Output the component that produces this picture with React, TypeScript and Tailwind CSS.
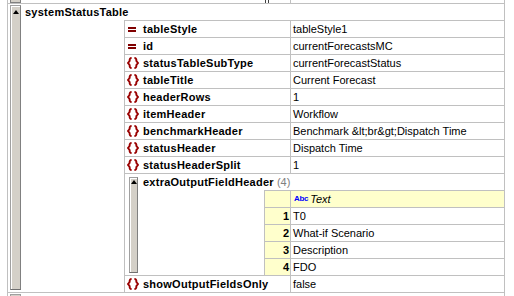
import React from "react";

type Prop = { kind: "attr" | "elem"; name: string; value: string };

const headProps: Prop[] = [
  { kind: "attr", name: "tableStyle", value: "tableStyle1" },
  { kind: "attr", name: "id", value: "currentForecastsMC" },
  { kind: "elem", name: "statusTableSubType", value: "currentForecastStatus" },
  { kind: "elem", name: "tableTitle", value: "Current Forecast" },
  { kind: "elem", name: "headerRows", value: "1" },
  { kind: "elem", name: "itemHeader", value: "Workflow" },
  { kind: "elem", name: "benchmarkHeader", value: "Benchmark &lt;br&gt;Dispatch Time" },
  { kind: "elem", name: "statusHeader", value: "Dispatch Time" },
  { kind: "elem", name: "statusHeaderSplit", value: "1" },
];

const extraFields = ["T0", "What-if Scenario", "Description", "FDO"];

function AttrIcon() {
  return (
    <span className="flex w-[18px] shrink-0 flex-col gap-[1px] pl-[3px]">
      <span className="h-[2px] w-[8px] bg-[#800000]" />
      <span className="h-[2px] w-[8px] bg-[#800000]" />
    </span>
  );
}

function ElemIcon() {
  return (
    <span className="flex w-[18px] shrink-0 pl-[2px]">
      <svg width="12" height="12" viewBox="0 0 12 12" fill="none">
        <path
          d="M4.6 1 C2.6 1 2.6 2.2 2.6 4 L1 6 L2.6 8 C2.6 9.8 2.6 11 4.6 11"
          stroke="#990000"
          strokeWidth="2"
        />
        <path
          d="M7.4 1 C9.4 1 9.4 2.2 9.4 4 L11 6 L9.4 8 C9.4 9.8 9.4 11 7.4 11"
          stroke="#990000"
          strokeWidth="2"
        />
      </svg>
    </span>
  );
}

// grey collapse strip with the little up arrow at its top
function CollapseBar({ wide }: { wide?: boolean }) {
  return (
    <div
      className={
        wide
          ? "flex w-[11px] flex-col items-center border border-[#a0a0a0] border-r-[#808080] border-b-[#707070] bg-[#d4d0c8] shadow-[inset_1px_1px_0_#ffffff]"
          : "flex w-[9px] flex-col items-center border border-[#a0a0a0] border-r-[#808080] border-b-[#707070] bg-[#d4d0c8] shadow-[inset_1px_1px_0_#ffffff]"
      }
    >
      <span
        className={
          wide
            ? "mt-[4px] h-0 w-0 border-x-[3px] border-b-[4px] border-x-transparent border-b-black"
            : "mt-[2px] h-0 w-0 border-x-[3px] border-b-[4px] border-x-transparent border-b-black"
        }
      />
    </div>
  );
}

function PropRow({ p }: { p: Prop }) {
  return (
    <div className="flex h-[17px] border-t border-[#c0c0c0]">
      <div className="flex w-[165px] shrink-0 items-center font-bold tracking-[0.25px]">
        {p.kind === "attr" ? <AttrIcon /> : <ElemIcon />}
        <span>{p.name}</span>
      </div>
      <div className="flex-1 truncate border-l border-[#c0c0c0] pl-[2px]">{p.value}</div>
    </div>
  );
}

export default function App() {
  return (
    <div className="h-[296px] w-[514px] overflow-hidden bg-white font-['Liberation_Sans',Arial,sans-serif] text-[11px] leading-[16px] text-black">
      <div className="ml-[7px] w-[498px] border-x border-[#c0c0c0]">
        {/* tail of the previous row */}
        <div className="flex h-[4px] border-b border-[#c0c0c0]">
          <div className="flex w-[282px] shrink-0">
            <div className="ml-[2px] h-[3px] w-[11px] border-x border-b border-[#808080] bg-[#d4d0c8]" />
            <div className="ml-[244px] flex h-[3px] gap-[2px]">
              <span className="w-[1px] bg-[#404040]" />
              <span className="w-[1px] bg-[#404040]" />
            </div>
          </div>
          <div className="flex-1 border-l border-[#c0c0c0]" />
        </div>

        {/* systemStatusTable */}
        <div className="flex border-b border-[#c0c0c0]">
          <div className="flex w-[17px] shrink-0 pt-[1px] pb-[2px] pl-[2px]">
            <CollapseBar wide />
          </div>
          <div className="flex-1">
            <div className="h-[16px] font-bold tracking-[0.25px]">systemStatusTable</div>
            <div className="ml-[99px] border-l border-[#c0c0c0]">
              {headProps.map((p) => (
                <PropRow key={p.name} p={p} />
              ))}

              {/* extraOutputFieldHeader */}
              <div className="flex border-t border-[#c0c0c0]">
                <div className="flex w-[18px] shrink-0 pt-[3px] pb-[2px] pl-[4px]">
                  <CollapseBar />
                </div>
                <div className="flex-1">
                  <div className="h-[16px]">
                    <span className="font-bold tracking-[0.25px]">extraOutputFieldHeader</span>{" "}
                    <span className="text-[#808080]">(4)</span>
                  </div>
                  <div className="ml-[121px] border-l border-[#c0c0c0]">
                    <div className="flex h-[17px] border-t border-[#c0c0c0] bg-[#ffffcc]">
                      <div className="w-[25px] shrink-0" />
                      <div className="flex flex-1 items-center border-l border-[#c0c0c0] pl-[3px]">
                        <span className="text-[8px] leading-none font-bold tracking-[-0.3px] text-[#0000ff]">
                          Abc
                        </span>
                        <span className="ml-[2px] italic">Text</span>
                      </div>
                    </div>
                    {extraFields.map((f, i) => (
                      <div key={f} className="flex h-[17px] border-t border-[#c0c0c0]">
                        <div className="w-[25px] shrink-0 bg-[#ffffcc] pr-[1px] text-right font-bold">
                          {i + 1}
                        </div>
                        <div className="flex-1 border-l border-[#c0c0c0] pl-[2px]">{f}</div>
                      </div>
                    ))}
                  </div>
                </div>
              </div>

              <PropRow p={{ kind: "elem", name: "showOutputFieldsOnly", value: "false" }} />
            </div>
          </div>
        </div>

        {/* start of the next row */}
        <div className="flex h-[8px] pt-[1px] pl-[2px]">
          <div className="h-[6px] w-[11px] border-x border-t border-[#a0a0a0] bg-[#d4d0c8]" />
        </div>
      </div>
    </div>
  );
}
